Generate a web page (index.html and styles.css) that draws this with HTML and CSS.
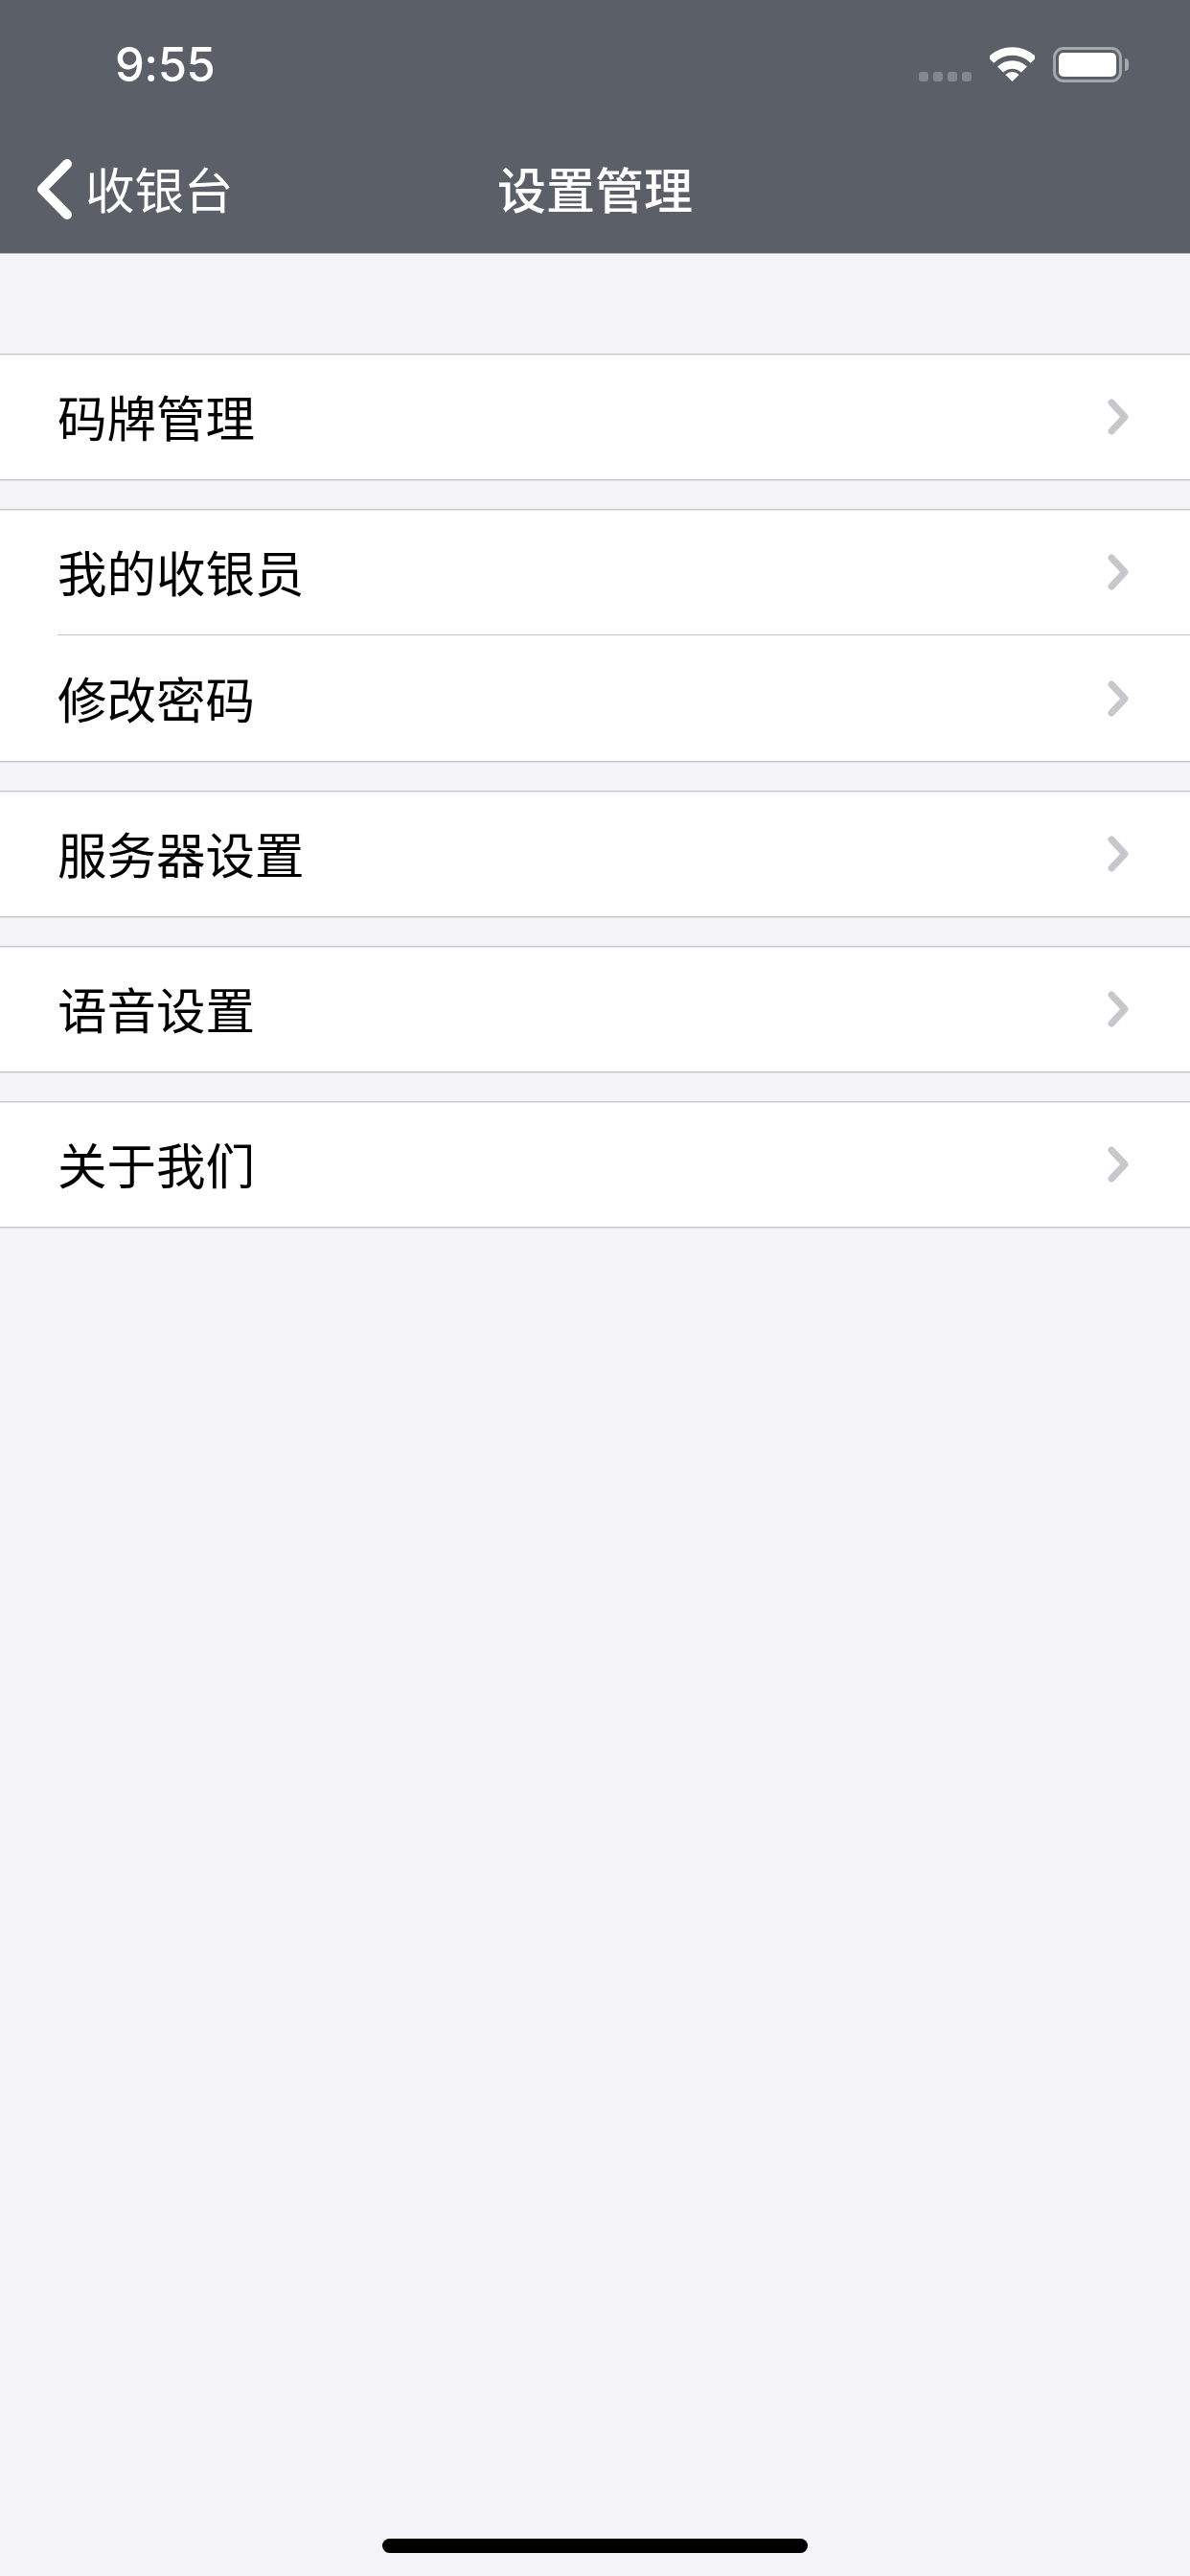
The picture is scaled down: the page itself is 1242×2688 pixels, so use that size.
FILE: index.html
```html
<!DOCTYPE html>
<html lang="zh-CN">
<head>
<meta charset="utf-8">
<title>设置管理</title>
<link rel="stylesheet" href="styles.css">
</head>
<body>
<div class="screen">
  <header class="header">
    <div class="status">
      <span class="time">9:55</span>
      <div class="status-icons">
        <div class="signal"><i></i><i></i><i></i><i></i></div>
        <svg class="wifi" width="47" height="36" viewBox="0 0 47 36" aria-hidden="true">
          <path class="wifi-arc" d="M1.2 13.7A31.5 31.5 0 0 1 45.8 13.7"/>
          <path class="wifi-arc" d="M11.1 23.6A17.5 17.5 0 0 1 35.9 23.6"/>
          <path class="wifi-dot" d="M23.5 36L16.4 28.9A10 10 0 0 1 30.6 28.9Z"/>
        </svg>
        <div class="battery"><div class="battery-body"><div class="battery-fill"></div></div><div class="battery-nub"></div></div>
      </div>
    </div>
    <nav class="nav">
      <div class="back">
        <svg class="back-icon" width="38" height="66" viewBox="0 0 38 66" aria-hidden="true"><path d="M32 6L6 32.5L32 59"/></svg>
        <span class="back-label">收银台</span>
      </div>
      <h1 class="title">设置管理</h1>
      <div></div>
    </nav>
  </header>
  <main class="list">
    <section class="group">
      <div class="row"><span class="label">码牌管理</span><svg class="chev" width="22" height="38" viewBox="0 0 22 38"><path d="M4 4L18 19L4 34"/></svg></div>
    </section>
    <section class="group">
      <div class="row"><span class="label">我的收银员</span><svg class="chev" width="22" height="38" viewBox="0 0 22 38"><path d="M4 4L18 19L4 34"/></svg></div>
      <div class="row"><span class="label">修改密码</span><svg class="chev" width="22" height="38" viewBox="0 0 22 38"><path d="M4 4L18 19L4 34"/></svg></div>
    </section>
    <section class="group">
      <div class="row"><span class="label">服务器设置</span><svg class="chev" width="22" height="38" viewBox="0 0 22 38"><path d="M4 4L18 19L4 34"/></svg></div>
    </section>
    <section class="group">
      <div class="row"><span class="label">语音设置</span><svg class="chev" width="22" height="38" viewBox="0 0 22 38"><path d="M4 4L18 19L4 34"/></svg></div>
    </section>
    <section class="group">
      <div class="row"><span class="label">关于我们</span><svg class="chev" width="22" height="38" viewBox="0 0 22 38"><path d="M4 4L18 19L4 34"/></svg></div>
    </section>
  </main>
  <div class="home-bar"></div>
</div>
</body>
</html>
```
FILE: styles.css
```css
* { box-sizing: border-box; }
html, body { margin: 0; padding: 0; }
body {
  width: 1242px;
  height: 2688px;
  overflow: hidden;
  background: #f4f4f9;
  font-family: "Noto Sans CJK SC", "Noto Sans", sans-serif;
}
.screen { height: 2688px; display: flex; flex-direction: column; }
.header { height: 265px; background: #5b6068; border-bottom: 1px solid #b4b6ba; color: #fff; flex: none; }
.status { height: 132px; display: flex; justify-content: space-between; padding: 40px 64px 0 120px; }
.time { font: 500 49px/56px Inter, sans-serif; height: 56px; letter-spacing: -0.5px; }
.status-icons { display: flex; align-items: flex-start; padding-top: 9px; }
.signal { display: flex; gap: 5px; margin-top: 26px; margin-right: 19px; }
.signal i { display: block; width: 10px; height: 10px; border-radius: 3px; background: #83878e; }
.wifi { display: block; margin-right: 19px; }
.wifi-arc { fill: none; stroke: #fff; stroke-width: 8.5; }
.wifi-dot { fill: #fff; }
.battery { display: flex; align-items: center; gap: 3px; }
.battery-body { width: 72px; height: 37px; border: 3px solid #a4a7ac; border-radius: 11px; padding: 3px; }
.battery-fill { width: 100%; height: 100%; background: #fff; border-radius: 5px; }
.battery-nub { width: 4px; height: 13px; background: #a4a7ac; border-radius: 0 4px 4px 0; }
.nav { height: 132px; display: grid; grid-template-columns: 1fr auto 1fr; align-items: center; }
.back { display: flex; align-items: center; padding-left: 38px; margin-top: -1px; font-size: 51.5px; line-height: 66px; font-weight: 400; }
.back-icon { display: block; margin-right: 13px; }
.back-icon path { fill: none; stroke: #fff; stroke-width: 10; stroke-linecap: round; stroke-linejoin: round; }
.back-label { margin-bottom: 3px; }
.title { margin: 0 0 5px; font-size: 51px; line-height: 66px; font-weight: 500; }
.list { flex: 1; padding-top: 104px; display: flex; flex-direction: column; gap: 30px; }
.group { background: #fff; border-top: 1px solid #c6c6ca; border-bottom: 1px solid #c6c6ca; box-shadow: 0 1px 0 #e0e0e4, inset 0 1px 0 #e8e8ea; }
.row { height: 130px; padding: 0 64px 0 60px; display: flex; align-items: center; justify-content: space-between; font-size: 51.5px; color: #000; font-weight: 400; }
.row + .row { height: 132px; border-top: 1px solid #c6c6ca; margin-left: 60px; padding-left: 0; }
.label { margin-bottom: 3px; }
.chev { display: block; }
.chev path { fill: none; stroke: #c7c7cc; stroke-width: 7; stroke-linecap: round; stroke-linejoin: round; }
.home-bar { flex: none; width: 444px; height: 15px; margin: 0 auto 24px; background: #000; border-radius: 8px; }
```
